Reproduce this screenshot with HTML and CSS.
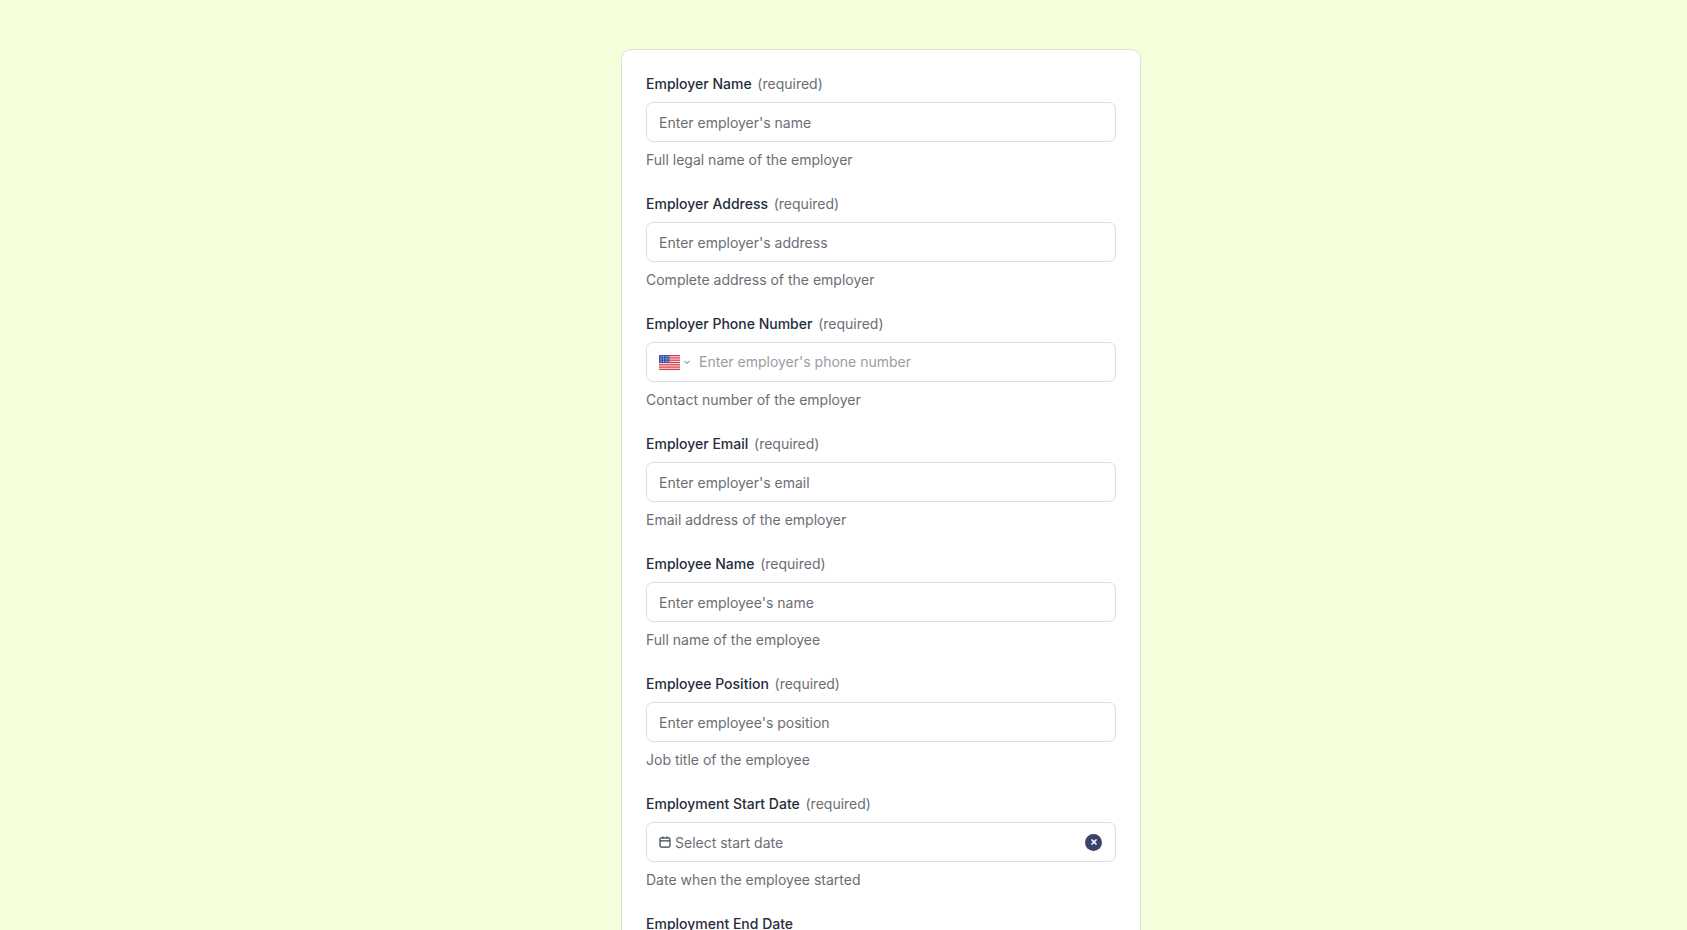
FILE: index.html
```html
<!DOCTYPE html>
<html>
<head>
    <meta charset="UTF-8">
    <title>Employment Verification</title>
    <link rel="stylesheet" href="styles.css">
</head>
<body>
    <form class="card">
        <div class="field">
            <label class="label">Employer Name <span class="required">(required)</span></label>
            <input class="input" type="text" placeholder="Enter employer's name">
            <p class="hint">Full legal name of the employer</p>
        </div>
        <div class="field">
            <label class="label">Employer Address <span class="required">(required)</span></label>
            <input class="input" type="text" placeholder="Enter employer's address">
            <p class="hint">Complete address of the employer</p>
        </div>
        <div class="field">
            <label class="label">Employer Phone Number <span class="required">(required)</span></label>
            <div class="input phone-input">
                <svg class="flag" viewBox="0 0 21 15" width="21" height="15">
                    <rect width="21" height="15" fill="#fbe3e3"/>
                    <g fill="#d43a4c">
                        <rect width="21" height="1.2"/>
                        <rect y="2.3" width="21" height="1.2"/>
                        <rect y="4.6" width="21" height="1.2"/>
                        <rect y="6.9" width="21" height="1.2"/>
                        <rect y="9.2" width="21" height="1.2"/>
                        <rect y="11.5" width="21" height="1.2"/>
                        <rect y="13.8" width="21" height="1.2"/>
                    </g>
                    <rect width="10.5" height="8" fill="#3d55a5"/>
                    <g fill="#d5dcf5">
                        <rect x="1.5" y="1.2" width="1" height="1"/>
                        <rect x="4" y="1.2" width="1" height="1"/>
                        <rect x="6.5" y="1.2" width="1" height="1"/>
                        <rect x="8.5" y="1.2" width="1" height="1"/>
                        <rect x="1.5" y="3.5" width="1" height="1"/>
                        <rect x="4" y="3.5" width="1" height="1"/>
                        <rect x="6.5" y="3.5" width="1" height="1"/>
                        <rect x="8.5" y="3.5" width="1" height="1"/>
                        <rect x="1.5" y="5.8" width="1" height="1"/>
                        <rect x="4" y="5.8" width="1" height="1"/>
                        <rect x="6.5" y="5.8" width="1" height="1"/>
                        <rect x="8.5" y="5.8" width="1" height="1"/>
                    </g>
                </svg>
                <svg class="chevron" viewBox="0 0 8 8" width="8" height="8">
                    <path d="M1.5 3 L4 5.5 L6.5 3" fill="none" stroke="#9ca3af" stroke-width="1.2"/>
                </svg>
                <input class="phone-field" type="text" placeholder="Enter employer's phone number">
            </div>
            <p class="hint">Contact number of the employer</p>
        </div>
        <div class="field">
            <label class="label">Employer Email <span class="required">(required)</span></label>
            <input class="input" type="text" placeholder="Enter employer's email">
            <p class="hint">Email address of the employer</p>
        </div>
        <div class="field">
            <label class="label">Employee Name <span class="required">(required)</span></label>
            <input class="input" type="text" placeholder="Enter employee's name">
            <p class="hint">Full name of the employee</p>
        </div>
        <div class="field">
            <label class="label">Employee Position <span class="required">(required)</span></label>
            <input class="input" type="text" placeholder="Enter employee's position">
            <p class="hint">Job title of the employee</p>
        </div>
        <div class="field">
            <label class="label">Employment Start Date <span class="required">(required)</span></label>
            <div class="input date-input">
                <svg class="calendar" viewBox="0 0 12 12" width="12" height="12">
                    <rect x="1" y="1.8" width="10" height="9.4" rx="1.5" fill="none" stroke="#374151" stroke-width="1.2"/>
                    <path d="M1 4.8 H11 M4 0.4 V2.6 M8 0.4 V2.6" fill="none" stroke="#374151" stroke-width="1.2"/>
                </svg>
                <span class="date-text">Select start date</span>
                <span class="clear">
                    <svg viewBox="0 0 8 8" width="8" height="8">
                        <path d="M1.5 1.5 L6.5 6.5 M6.5 1.5 L1.5 6.5" stroke="#fff" stroke-width="1.6" fill="none"/>
                    </svg>
                </span>
            </div>
            <p class="hint">Date when the employee started</p>
        </div>
        <div class="field">
            <label class="label">Employment End Date</label>
        </div>
    </form>
</body>
</html>
```

FILE: styles.css
```css
html, body {
    height: 100%;
    overflow: hidden;
}
body {
    font-family: Inter, Arial, sans-serif;
    font-size: 14px;
    line-height: 20px;
    background-color: #f4fedb;
    color: #262d3a;
    margin: 0;
    padding: 49px 0 0 621px;
}
.card {
    width: 520px;
    box-sizing: border-box;
    background-color: #fff;
    border: 1px solid #dfe2cf;
    border-radius: 10px;
    padding: 24px;
    display: flex;
    flex-direction: column;
    gap: 24px;
}
.field {
    display: flex;
    flex-direction: column;
    gap: 8px;
}
.label {
    font-weight: 500;
    display: block;
}
.required {
    font-weight: 400;
    color: #6b6e75;
    margin-left: 2px;
}
.input {
    height: 40px;
    width: 100%;
    box-sizing: border-box;
    border: 1px solid #dcdee2;
    border-radius: 7px;
    padding: 0 12px;
    margin: 0;
    font-family: inherit;
    font-size: 14px;
    color: #262d3a;
    background-color: #fff;
}
.input::placeholder {
    color: #6b6e75;
    opacity: 1;
}
.hint {
    margin: 0;
    color: #6b6e75;
}
.phone-input {
    display: flex;
    align-items: center;
}
.flag {
    flex: none;
}
.chevron {
    flex: none;
    margin-left: 3px;
}
.phone-field {
    flex: 1;
    min-width: 0;
    border: none;
    outline: none;
    padding: 0 0 2px;
    margin-left: 8px;
    font-family: inherit;
    font-size: 14px;
    background: none;
}
.phone-field::placeholder {
    color: #9a9da3;
    opacity: 1;
}
.date-input {
    display: flex;
    align-items: center;
    color: #6b6e75;
}
.calendar {
    flex: none;
}
.date-text {
    margin-left: 4px;
    padding-top: 2px;
    flex: 1;
}
.clear {
    width: 17px;
    height: 17px;
    border-radius: 50%;
    background-color: #3b4468;
    display: flex;
    align-items: center;
    justify-content: center;
    margin-right: 1px;
}
```
